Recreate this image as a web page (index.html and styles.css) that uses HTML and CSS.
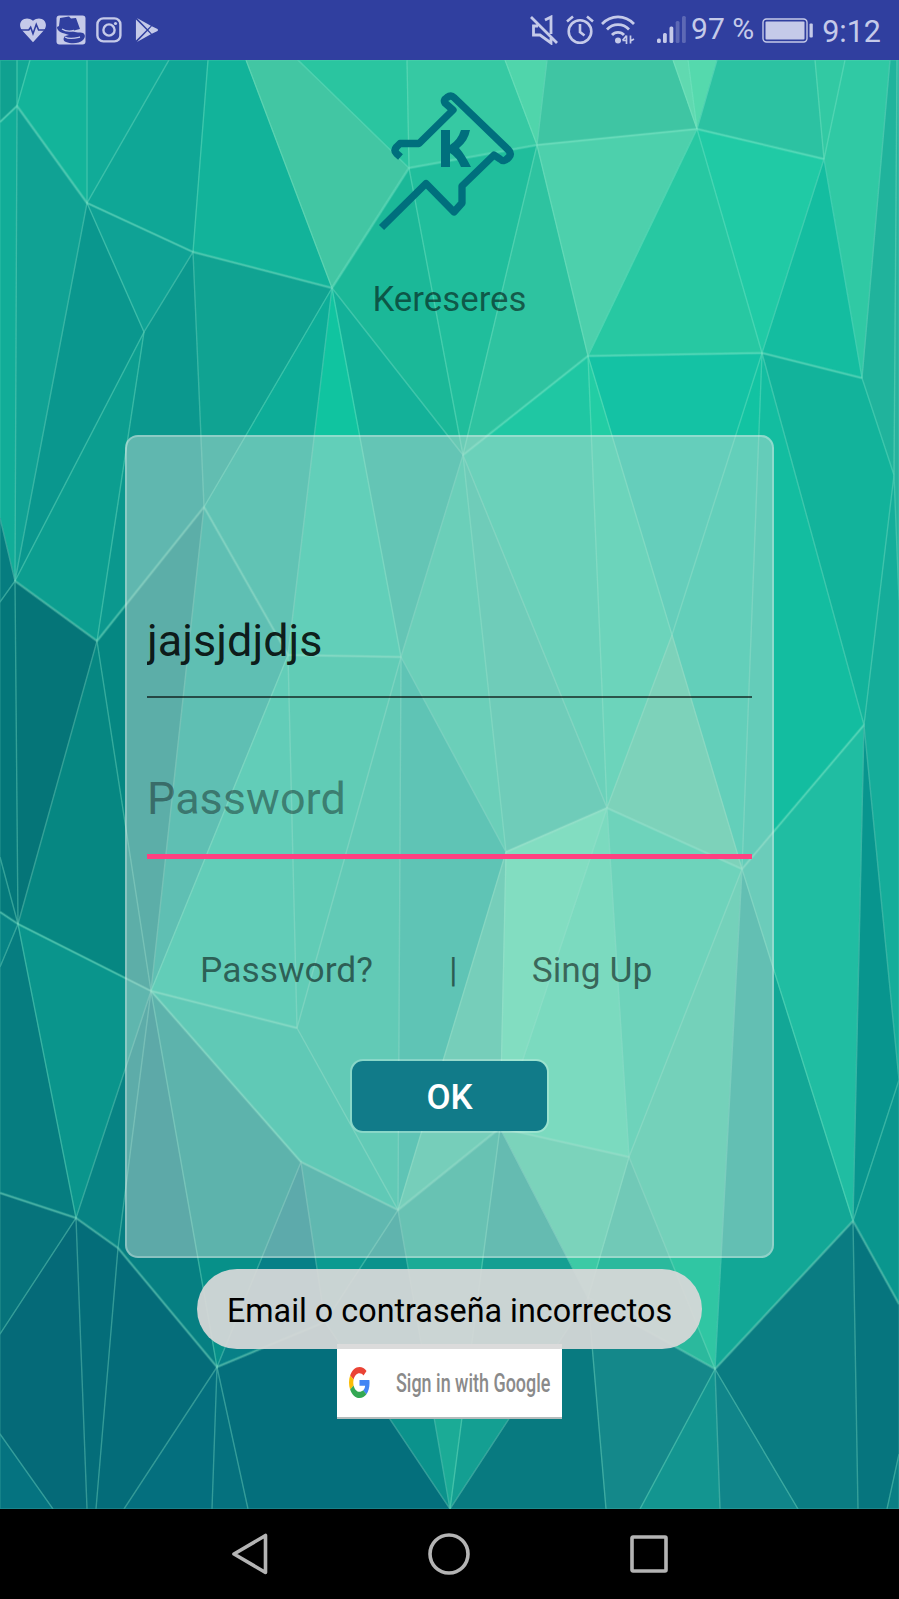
FILE: index.html
```html
<!DOCTYPE html>
<html lang="es">
<head>
<meta charset="utf-8">
<title>Kereseres</title>
<link rel="stylesheet" href="styles.css">
</head>
<body>
<div class="phone">
  <header class="status">
    <div class="status-left">
      <svg class="s-heart" width="28" height="28" viewBox="0 0 30 30"><path d="M15 28 L3 15 C-3 6 7 -1.500 15 5 C23 -1.500 33 6 27 15 Z" fill="#c5cae9"/><path d="M0 15h10.500l2-3 2.500 7 3.500-10 2.500 6H30" fill="none" stroke="#303f9f" stroke-width="1.700"/></svg>
      <svg class="s-hat" width="30" height="30" viewBox="0 0 30 30"><rect x=".5" y=".5" width="29" height="29" rx="3" fill="#c5cae9"/><path d="M4 3l9-1.500 2 2 5-.5 4 11-8 2c4 2 8 1 11 2 3 2 2 5 0 7-4 4-12 4-17 2-3-1-3-4-1-6l4-1C7 18 1 17 1 12l2-1z" fill="#303f9f"/><path d="M6 14c3 2 8 2.500 12 1.500M9 22c5 3 11 1 15 0" stroke="#c5cae9" fill="none" stroke-width="1.300"/></svg>
      <svg class="s-insta" width="26" height="26" viewBox="0 0 26 26" fill="none" stroke="#c5cae9" stroke-width="2.400"><rect x="1.400" y="1.400" width="23" height="23" rx="6"/><circle cx="13" cy="13" r="5.600"/><circle cx="19.500" cy="6.500" r="1.600" fill="#c5cae9" stroke="none"/></svg>
      <svg class="s-play" width="24" height="26" viewBox="0 0 25 26" fill="#c5cae9"><path d="M1 2v22L12 13z"/><path d="M2 .5L13 12l3.500-3.500zM2 25.500L13 14l3.500 3.500zM17.500 9L14 13l3.500 4 6-3q1-1 0-2z"/></svg>
    </div>
    <div class="status-right">
      <svg width="28" height="30" viewBox="0 0 28 30" fill="none" stroke="#c5cae9" stroke-width="2.800"><path d="M15 5l6-3v17M8 11H3.500v9H10l11 8v-5M1 2l26 26"/></svg>
      <svg class="s-alarm" width="28" height="30" viewBox="0 0 28 30" fill="none" stroke="#c5cae9" stroke-width="2.600"><circle cx="14" cy="16.500" r="11.300"/><path d="M14 9v8l4.500 3.500M1 6.500L7 1.500M27 6.500L21 1.500"/></svg>
      <svg class="s-wifi" width="34" height="30" viewBox="0 0 34 30" fill="none" stroke="#c5cae9" stroke-width="2.700"><path d="M1 9C10-.5 24-.5 33 9M6 14.500c6-6.500 16-6.500 22 0M11 20c3-3.500 9-3.500 12 0"/><circle cx="17" cy="25.500" r="3" fill="#c5cae9" stroke="none"/><path d="M25.500 20.500v8.500M21.500 25.500h4M25.500 20.500l-4 5M29.500 20.500v8M29.500 26l3.500-2" stroke-width="1.700"/></svg>
      <svg class="s-signal" width="30" height="28" viewBox="0 0 30 28" fill="#c5cae9"><rect x="1" y="22.500" width="3.800" height="4.500" rx="1.500"/><rect x="7" y="17" width="3.800" height="10" rx="1.500"/><rect x="13.500" y="10.500" width="3.800" height="16.500" rx="1.500"/><g opacity=".3"><rect x="19.700" y="5" width="3.800" height="22" rx="1.500"/><rect x="26" y="0" width="3.800" height="27" rx="1.500"/></g></svg>
      <span class="pct">97 %</span>
      <svg class="s-batt" width="52" height="25" viewBox="0 0 52 25"><rect x="1" y="1" width="44" height="23" rx="3.500" fill="none" stroke="#c5cae9" stroke-width="1.400"/><rect x="3.500" y="3.500" width="39" height="18" rx="1" fill="#c5cae9"/><rect x="47.500" y="5.500" width="3.300" height="14" rx="1" fill="#c5cae9"/></svg>
      <span class="clock">9:12</span>
    </div>
  </header>

  <main class="screen">
    <svg class="mesh" id="mesh" width="899" height="1449" viewBox="0 60 899 1449"></svg>
    <section class="brand">
      <svg class="logo" width="140" height="144" viewBox="0 0 140 144"><path d="M22.500 65l-4-3.500q-3-3 0-6.500l3.500-3.500H41L75 18l-8-7q-2-3 2-5.500 4-3 7 0L130 57.500q4 4 1 7.500-5 6-9 2l-6-4L84 94v17l-8 9L48 91.500 3.500 135.500" fill="none" stroke="#006f7d" stroke-width="7.300" stroke-linejoin="round"/><path d="M63 38h9v15q8-5 11-15h9q-2 11-11 18 6 7 12 19H83Q79 65 72 61v14h-9z" fill="#006f7d"/></svg>
      <h1 class="name">Kereseres</h1>
    </section>

    <form class="card">
      <input class="field user" type="text" value="jajsjdjdjs">
      <input class="field pass" type="text" placeholder="Password">
      <div class="links"><span class="l1">Password?</span><span class="l2">|</span><span class="l3">Sing Up</span></div>
      <button class="ok" type="button">OK</button>
    </form>

    <div class="google">
      <svg class="g-logo" width="21" height="31" viewBox="0 0 48 48" preserveAspectRatio="none"><path fill="#EA4335" d="M24 9.500c3.540 0 6.710 1.220 9.210 3.600l6.850-6.850C35.900 2.380 30.470 0 24 0 14.620 0 6.510 5.380 2.560 13.220l7.980 6.190C12.430 13.720 17.740 9.500 24 9.500z"/><path fill="#4285F4" d="M46.980 24.550c0-1.570-.15-3.090-.38-4.550H24v9.020h12.940c-.58 2.960-2.260 5.480-4.780 7.180l7.730 6c4.510-4.180 7.090-10.360 7.090-17.650z"/><path fill="#FBBC05" d="M10.530 28.590c-.48-1.450-.76-2.990-.76-4.590s.27-3.140.76-4.590l-7.980-6.190C.92 16.460 0 20.120 0 24c0 3.880.92 7.540 2.560 10.780l7.970-6.190z"/><path fill="#34A853" d="M24 48c6.480 0 11.930-2.130 15.890-5.810l-7.730-6c-2.150 1.450-4.920 2.300-8.160 2.300-6.260 0-11.570-4.220-13.470-9.910l-7.980 6.190C6.510 42.620 14.620 48 24 48z"/></svg>
      <span class="g-text">Sign in with Google</span>
    </div>
    <div class="toast">Email o contraseña incorrectos</div>
  </main>

  <nav class="nav">
    <svg width="36" height="42" viewBox="0 0 36 42"><path d="M33.500 2.500v37L2 21z"/></svg>
    <svg class="n-home" width="42" height="42" viewBox="0 0 42 42"><circle cx="21" cy="21" r="19"/></svg>
    <svg class="n-recent" width="38" height="38" viewBox="0 0 38 38"><rect x="2" y="2" width="34" height="34" rx="1"/></svg>
  </nav>
</div>
<script src="mesh.js"></script>
</body>
</html>
```
FILE: styles.css
```css
* { box-sizing: border-box; }
body { margin: 0; font-family: Roboto, "Liberation Sans", sans-serif; }
.phone { width: 899px; height: 1599px; display: flex; flex-direction: column; overflow: hidden; }

.status { height: 60px; flex: none; background: #303f9f; color: #c5cae9; display: flex; justify-content: space-between; padding: 0 18px 0 19px; }
.status-left, .status-right { display: flex; align-items: center; }
.status svg { flex: none; }
.s-hat { margin-left: 9px; }
.s-insta { margin-left: 10px; }
.s-play { margin-left: 13px; }
.s-alarm { margin-left: 8px; }
.s-wifi { margin-left: 7px; }
.s-signal { margin-left: 21px; }
.pct { font-size: 30px; line-height: 58px; height: 60px; margin-left: 5px; white-space: nowrap; }
.s-batt { margin-left: 8px; }
.clock { font-size: 30.500px; line-height: 63px; height: 60px; margin-left: 8px; }

.screen { position: relative; height: 1449px; flex: none; display: flex; flex-direction: column; align-items: center; background: #12a796; }
.mesh { position: absolute; left: 0; top: 0; }
.brand { position: relative; display: flex; flex-direction: column; align-items: center; padding-top: 32px; height: 375px; flex: none; }
.logo { margin-right: 3px; }
.name { margin: 43px 0 0; font-size: 34.800px; line-height: 40px; font-weight: 400; color: rgba(0, 0, 0, .54); }

.card { position: relative; width: 649px; height: 823px; flex: none; border: 2px solid rgba(255, 255, 255, .28); border-radius: 13px; background: rgba(200, 222, 216, .45); display: flex; flex-direction: column; align-items: center; padding: 173px 20px 0; }
.field { display: block; width: 605px; flex: none; border: 0; border-radius: 0; background: none; outline: 0; font-family: inherit; font-size: 45px; color: rgba(0, 0, 0, .87); }
.user { height: 88px; padding: 0 0 26px; border-bottom: 2px solid rgba(0, 0, 0, .6); }
.pass { height: 91px; margin-top: 70px; padding: 0 0 26px; border-bottom: 5px solid #ff4081; }
.pass::placeholder { color: rgba(0, 0, 0, .4); opacity: 1; }
.links { display: flex; align-self: stretch; margin-top: 91px; padding-left: 53px; font-size: 35.400px; line-height: 40px; color: rgba(0, 0, 0, .54); }
.l2 { margin-left: 76px; }
.l3 { margin-left: 74px; }
.ok { width: 199px; height: 74px; flex: none; margin-top: 69px; border: 2px solid rgba(255, 255, 255, .25); border-radius: 13px; background: #117b89; background-clip: padding-box; color: #fff; font: 500 35px Roboto, sans-serif; padding: 2px 0 0; }

.google { position: relative; width: 225px; height: 75px; margin-top: 86px; flex: none; background: #fff; border-bottom: 2px solid #b5bcbc; display: flex; align-items: center; padding: 2px 0 0 12px; }
.g-logo { flex: none; margin-top: 1px; }
.g-text { flex: none; margin: 4px 0 0 26px; font-size: 25px; line-height: 30px; font-weight: 500; color: #8a8a8a; white-space: nowrap; transform: scaleX(.718); transform-origin: left; width: 150px; }
.toast { position: absolute; left: 197px; top: 1209px; width: 505px; height: 80px; border-radius: 40px; background: rgba(216, 216, 216, .93); color: #000; font-size: 32.300px; line-height: 84px; text-align: center; white-space: nowrap; }

.nav { height: 90px; flex: none; background: #000; display: flex; align-items: center; padding-left: 232px; }
.nav svg { flex: none; fill: none; stroke: #b4b4b4; stroke-width: 3.600; stroke-linejoin: round; }
.n-home { margin-left: 160px; }
.n-recent { margin-left: 160px; }
```
FILE: mesh.js
```javascript
// Corner points of the faceted background; literal "x,y" pairs are points on its edges.
const V = {
  A: [17,106], B: [87,203], C: [193,252], D: [144,332], E: [332,288], F: [409,168],
  G: [537,145], H: [697,129], I: [824,159], J: [588,356], K: [762,353], L: [862,378],
  M: [463,455], N: [15,581], O: [97,641], P: [204,507], Q: [288,655], R: [401,657],
  S: [18,924], T: [151,991], U: [672,635], V: [607,808], W: [506,852], X: [742,869],
  Y: [864,725], Z: [894,475],
  a: [76,1218], b: [118,1248], c: [297,1028], d: [301,1162], e: [398,1210], f: [217,1367],
  g: [629,1157], h: [500,1128], i: [715,1369], j: [853,1221], k: [450,1509],
  l: [588,1298], m: [325,1322]
};
const faces = [
  ["0,60 17,60 A 0,122", "#10a190"], ["17,60 30,60 A", "#11a995"], ["30,60 87,60 B A", "#13b49a"],
  ["87,60 169,60 B", "#11ab98"], ["169,60 208,60 C B", "#0fa796"], ["208,60 246,60 E C", "#12b39a"],
  ["246,60 298,60 F E", "#42c6a3"], ["298,60 407,60 F", "#2ac5a0"], ["407,60 505,60 G F", "#36c9a3"],
  ["505,60 547,60 G", "#50d5ab"], ["547,60 673,60 H G", "#3fc5a3"], ["673,60 688,60 H", "#60d9b0"],
  ["688,60 717,60 H", "#55d9ad"], ["717,60 815,60 I H", "#2cc2a2"], ["815,60 845,60 I", "#32c9a3"],
  ["845,60 890,60 L I", "#30c9a4"], ["890,60 897,60 Z L", "#20b39c"], ["897,60 899,60 899,600 Z", "#26b39e"],
  ["0,122 A N 0,518", "#11ad98"], ["A B N", "#10a294"], ["B D N", "#0a978e"], ["B C D", "#0fa295"],
  ["C E P", "#10a392"], ["C P O D", "#0b988e"], ["D O N", "#0c9e90"], ["E F M", "#1bb898"],
  ["F G M", "#20be9c"], ["G J M", "#2ec3a0"], ["G H J", "#4dd0ac"], ["H K J", "#27c8a2"],
  ["H I K", "#20caa5"], ["I L K", "#14bda0"], ["J K U", "#14c2a4"], ["M J V", "#1fc7a3"],
  ["J U V", "#22cda4"], ["K X U", "#12c3a2"], ["K Y X", "#13bda0"], ["K L Z Y", "#12b39b"],
  ["Z 899,600 899,1080 Y", "#15ad9a"], ["M V W", "#27bea0"], ["M W R", "#1fc3a0"],
  ["E M R", "#13b199"], ["E R Q", "#10c4a0"], ["E Q P", "#0dad98"], ["P Q T", "#0aa695"],
  ["P T O", "#058782"], ["T O S", "#068782"], ["N O S", "#057578"], ["0,602 N S 0,857", "#04777a"],
  ["0,518 N 0,602", "#067d80"], ["0,857 S 0,912", "#057a7c"], ["0,912 S 0,967", "#078485"],
  ["0,967 S a 0,1193", "#067d80"], ["S T a", "#0a958c"], ["T b a", "#078384"], ["T f b", "#067f82"],
  ["T d f", "#079089"], ["T c e d", "#0cb89c"], ["Q T c", "#10c09f"], ["Q R c", "#0ebd9c"],
  ["R e c", "#10ba9b"], ["R W e", "#0ab09a"], ["W h e", "#33c2a2"], ["W V h", "#4adcb0"],
  ["U V X", "#40c9a3"],
  ["V g h", "#3cd8ac"], ["V X g", "#25cba4"], ["X i g", "#30c6a3"], ["X j i", "#12a796"],
  ["X Y j", "#20bda2"], ["Y j 899,1080", "#08958e"], ["j 899,1080 899,1304", "#0a968e"],
  ["i j 858,1509 798,1509", "#0a7c82"], ["j 899,1304 899,1454 887,1509 858,1509", "#06757e"],
  ["899,1454 887,1509 899,1509", "#0a7f84"], ["g i l", "#2bb99d"], ["g h l", "#3ccaa5"],
  ["h l k", "#149f92"], ["l 606,1509 k", "#087a80"], ["l i 640,1509 606,1509", "#14888a"],
  ["i 640,1509 720,1509", "#139590"], ["i 720,1509 798,1509", "#10858a"], ["e h k", "#1bab96"],
  ["d e m", "#0b9a90"], ["e k m", "#0b928c"], ["d m f", "#078087"], ["f m k 248,1509", "#046f7c"],
  ["f 248,1509 212,1509", "#05717e"], ["f 212,1509 124,1509", "#046f7e"],
  ["f 124,1509 96,1509 b", "#046c79"], ["a b 96,1509 87,1509", "#046d79"],
  ["a 87,1509 53,1509 0,1434 0,1334", "#056a78"], ["0,1193 a 0,1334", "#06737b"],
  ["0,1434 53,1509 0,1509", "#057380"]
];
const creases = ["B C", "C E", "F G", "G H", "H I", "J K", "K L", "J M", "N O", "O P", "Q R",
  "V X", "X Y", "T c", "T d", "d e", "e h", "h g", "0,912 S", "S T", "0,1193 a", "a b", "b f",
  "f m", "l i", "i j", "j 899,1304", "V W", "E F", "0,122 A", "A B", "P Q"];
const coords = s => s.split(" ").map(p => V[p] ? V[p].join(",") : p).join(" ");
let out = "";
for (const [pts, fill] of faces)
  out += `<polygon points="${coords(pts)}" fill="${fill}" stroke="${fill}" stroke-width="1"/>`;
for (const [pts] of faces)
  out += `<polygon points="${coords(pts)}" fill="none" stroke="#8ceccd" stroke-opacity=".2" stroke-width="1.4"/>`;
for (const pts of creases)
  out += `<polyline points="${coords(pts)}" fill="none" stroke="#7fe6c8" stroke-opacity=".22" stroke-width="3"/>`;
document.getElementById("mesh").innerHTML = out;
```
